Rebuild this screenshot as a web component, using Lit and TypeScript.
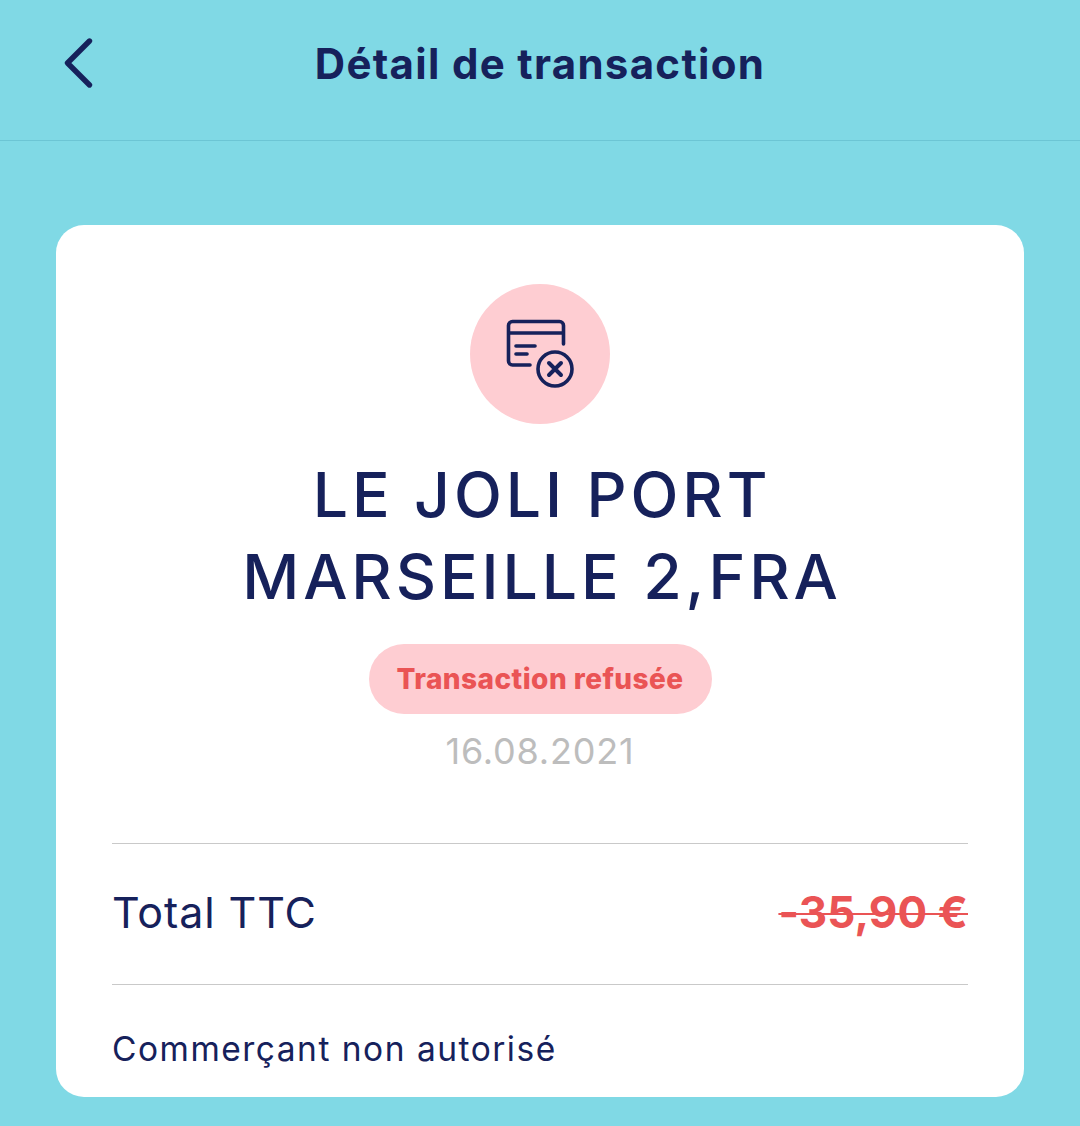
import { LitElement, html, css } from "lit";
import { customElement } from "lit/decorators.js";

@customElement("app-root")
export class AppRoot extends LitElement {
  static styles = css`
    :host { display: block; width: 1080px; height: 1126px; background: #80d9e5; font-family: Inter, "Liberation Sans", sans-serif; color: #16215b; overflow: hidden; }
    .header { border-bottom: 1px solid #6cc5d4; display: grid; grid-template-columns: 64px 1fr 64px; align-items: center; padding: 0 56px 14px; box-sizing: content-box; width: 968px; height: 126px; }
    .back { width: 40px; height: 60px; display: block; }
    .header h1 { margin: 0; text-align: center; font-size: 42px; font-weight: 700; line-height: 48px; letter-spacing: 1.3px; position: relative; top: 1px; }
    .card { margin: 84px 56px 0; background: #fff; border-radius: 28px; height: 872px; box-sizing: border-box; padding: 59px 56px 0; display: flex; flex-direction: column; align-items: center; }
    .circle { width: 140px; height: 140px; border-radius: 50%; background: #fecdd2; display: flex; align-items: center; justify-content: center; flex: none; }
    .circle svg { width: 80px; height: 80px; display: block; }
    .title { margin: 29px 0 0; padding-left: 4px; text-align: center; font-size: 62.5px; font-weight: 500; line-height: 82px; letter-spacing: 3.9px; }
    .badge { margin-top: 27px; height: 70px; width: 343px; border-radius: 35px; background: #fecdd2; color: #ea5455; font-size: 28px; font-weight: 800; letter-spacing: 0.45px; display: flex; align-items: center; justify-content: center; flex: none; }
    .date { margin-top: 15px; color: #bdbdbd; font-size: 36px; line-height: 44px; letter-spacing: 0.8px; font-weight: 400; }
    .rows { width: 100%; margin-top: 70px; }
    .total { border-top: 1px solid #c9c9c9; border-bottom: 1px solid #c9c9c9; height: 140px; box-sizing: content-box; display: flex; align-items: center; justify-content: space-between; }
    .label { font-size: 43px; font-weight: 400; letter-spacing: 0.9px; position: relative; top: -2px; }
    .amount { font-size: 44px; font-weight: 700; color: #ea5455; text-decoration: line-through; text-decoration-thickness: 2px; letter-spacing: 0.1px; position: relative; top: -2px; }
    .reason { margin-top: 42px; font-size: 33.5px; line-height: 44px; font-weight: 400; letter-spacing: 1.5px; }
  `;

  render() {
    return html`
      <div class="header">
        <svg class="back" viewBox="0 0 40 60" fill="none" stroke="#16215b" stroke-width="5.4" stroke-linecap="round" stroke-linejoin="round">
          <path d="M33.5 8 L11.5 30 L33.5 52"/>
        </svg>
        <h1>Détail de transaction</h1>
        <span></span>
      </div>
      <div class="card">
        <div class="circle">
          <svg viewBox="0 0 80 80" fill="none" stroke="#16215b" stroke-width="3.6" stroke-linecap="round" stroke-linejoin="round">
            <path d="M30 51 H12.5 a4 4 0 0 1 -4 -4 V11.5 a4 4 0 0 1 4 -4 H59.5 a4 4 0 0 1 4 4 V30"/>
            <path d="M9 19 H63"/>
            <path d="M16 32 H35"/>
            <path d="M16 40 H27"/>
            <circle cx="55" cy="55" r="17"/>
            <path d="M49 49 L61 61 M61 49 L49 61" stroke-width="4"/>
          </svg>
        </div>
        <h2 class="title">LE JOLI PORT<br />MARSEILLE 2,FRA</h2>
        <div class="badge">Transaction refusée</div>
        <div class="date">16.08.2021</div>
        <div class="rows">
          <div class="total">
            <span class="label">Total TTC</span>
            <span class="amount">-35,90 €</span>
          </div>
          <div class="reason">Commerçant non autorisé</div>
        </div>
      </div>
    `;
  }
}
